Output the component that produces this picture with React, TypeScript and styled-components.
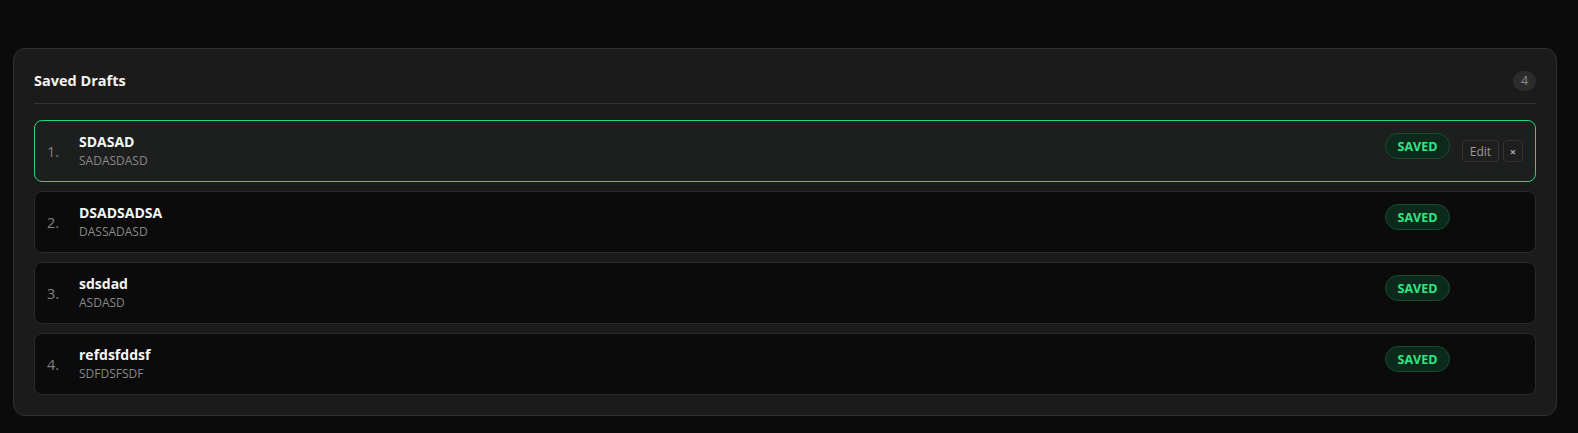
import React from "react";
import styled, { createGlobalStyle } from "styled-components";

const Global = createGlobalStyle`
  html, body { margin: 0; padding: 0; background: #0b0b0b; }
  body { font-family: "Open Sans", "Noto Sans", sans-serif; color: #eee; }
`;

const Page = styled.div`
  padding: 48px 21px 18px 13px;
`;

const Panel = styled.section`
  background: #1b1b1b;
  border: 1px solid #2f2f2f;
  border-radius: 12px;
  padding: 20px;
`;

const Header = styled.div`
  display: flex;
  align-items: center;
  justify-content: space-between;
  padding-top: 1px;
  padding-bottom: 12px;
  border-bottom: 1px solid #333;
  margin-bottom: 16px;
`;

const Title = styled.h2`
  margin: 0;
  font-size: 14.5px;
  font-weight: 700;
  color: #f4f4f4;
  line-height: 20px;
  padding-top: 1px;
`;

const Count = styled.span`
  min-width: 23px;
  height: 20px;
  border-radius: 10px;
  background: #2c2c2c;
  color: #8a8a8a;
  font-size: 12.5px;
  display: inline-flex;
  align-items: center;
  justify-content: center;
`;

const List = styled.div`
  display: flex;
  flex-direction: column;
  gap: 9px;
`;

const Row = styled.div<{ $active?: boolean }>`
  display: flex;
  align-items: center;
  height: 62px;
  box-sizing: border-box;
  padding: 12px;
  border-radius: 8px;
  border: 1px solid ${(p) => (p.$active ? "#1fd977" : "#2a2a2a")};
  background: ${(p) => (p.$active ? "#1c1f1e" : "#0b0b0b")};
`;

const Num = styled.span`
  width: 20px;
  margin-right: 12px;
  font-size: 14.5px;
  color: #808080;
`;

const Body = styled.div`
  flex: 1;
  display: flex;
  flex-direction: column;
`;

const ItemTitle = styled.div`
  font-size: 14px;
  font-weight: 700;
  color: #f5f5f5;
  line-height: 19px;
`;

const ItemSub = styled.div`
  font-size: 12px;
  color: #888;
  line-height: 20px;
`;

const Badge = styled.span`
  align-self: flex-start;
  box-sizing: border-box;
  width: 65px;
  height: 26px;
  border-radius: 13px;
  background: #0c2a1b;
  border: 1px solid #1a4a31;
  color: #2de882;
  font-size: 12.5px;
  font-weight: 700;
  display: inline-flex;
  align-items: center;
  justify-content: center;
`;

const Actions = styled.div<{ $visible?: boolean }>`
  display: flex;
  gap: 4px;
  margin-left: 12px;
  visibility: ${(p) => (p.$visible ? "visible" : "hidden")};
`;

const SmallBtn = styled.button<{ $square?: boolean }>`
  box-sizing: border-box;
  height: 22px;
  width: ${(p) => (p.$square ? "20px" : "37px")};
  padding: 0;
  border-radius: 4px;
  border: 1px solid #333;
  background: #1e1e1e;
  color: ${(p) => (p.$square ? "#aaa" : "#9a9a9a")};
  font-family: inherit;
  font-size: ${(p) => (p.$square ? "11px" : "12px")};
  font-weight: ${(p) => (p.$square ? 700 : 400)};
  display: inline-flex;
  align-items: center;
  justify-content: center;
  cursor: pointer;
`;

const drafts = [
  { title: "SDASAD", sub: "SADASDASD" },
  { title: "DSADSADSA", sub: "DASSADASD" },
  { title: "sdsdad", sub: "ASDASD" },
  { title: "refdsfddsf", sub: "SDFDSFSDF" },
];

export default function App() {
  return (
    <Page>
      <Global />
      <Panel>
        <Header>
          <Title>Saved Drafts</Title>
          <Count>{drafts.length}</Count>
        </Header>
        <List>
          {drafts.map((d, i) => (
            <Row key={i} $active={i === 0}>
              <Num>{i + 1}.</Num>
              <Body>
                <ItemTitle>{d.title}</ItemTitle>
                <ItemSub>{d.sub}</ItemSub>
              </Body>
              <Badge>SAVED</Badge>
              <Actions $visible={i === 0}>
                <SmallBtn>Edit</SmallBtn>
                <SmallBtn $square>×</SmallBtn>
              </Actions>
            </Row>
          ))}
        </List>
      </Panel>
    </Page>
  );
}
